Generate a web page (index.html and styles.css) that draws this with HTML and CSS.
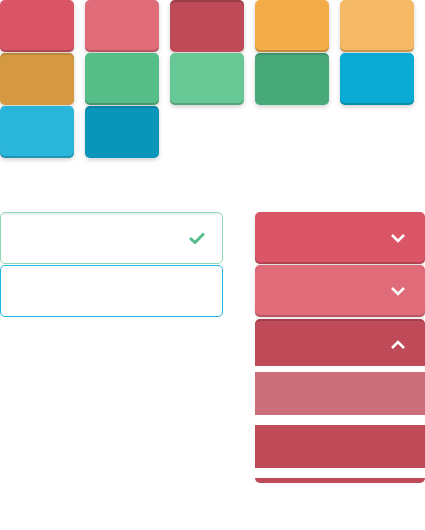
FILE: index.html
```
<!DOCTYPE html>
<html lang="en">
<head>
<meta charset="utf-8">
<title>Flat UI states</title>
<link rel="stylesheet" href="styles.css">
</head>
<body>
<div class="swatches">
  <div class="sw red"></div>
  <div class="sw red-hover"></div>
  <div class="sw red-active"></div>
  <div class="sw orange"></div>
  <div class="sw orange-hover"></div>
  <div class="sw orange-active"></div>
  <div class="sw green"></div>
  <div class="sw green-hover"></div>
  <div class="sw green-active"></div>
  <div class="sw blue"></div>
  <div class="sw blue-hover"></div>
  <div class="sw blue-active"></div>
</div>
<div class="forms">
  <div class="inputs">
    <div class="field valid">
      <svg class="check" width="18" height="12" viewBox="0 0 18 12"><path d="M2 6 L7 10.5 L16 1.5" fill="none" stroke="#56be89" stroke-width="3"/></svg>
    </div>
    <div class="field focus"></div>
  </div>
  <div class="drops">
    <div class="drop">
      <svg class="chev" width="16" height="10" viewBox="0 0 16 10"><path d="M2 2 L8 8 L14 2" fill="none" stroke="#fff" stroke-width="2.5"/></svg>
    </div>
    <div class="drop hover">
      <svg class="chev" width="16" height="10" viewBox="0 0 16 10"><path d="M2 2 L8 8 L14 2" fill="none" stroke="#fff" stroke-width="2.5"/></svg>
    </div>
    <div class="drop open">
      <svg class="chev" width="16" height="10" viewBox="0 0 16 10"><path d="M2 8 L8 2 L14 8" fill="none" stroke="#fff" stroke-width="2.5"/></svg>
    </div>
    <ul class="menu">
      <li class="item hl"></li>
      <li class="item"></li>
    </ul>
  </div>
</div>
</body>
</html>
```
FILE: styles.css
```
html, body {
  margin: 0;
  padding: 0;
  background: #fff;
  font-family: "Lato", "Liberation Sans", sans-serif;
}
.swatches {
  display: grid;
  grid-template-columns: repeat(5, 74px);
  grid-auto-rows: 52px;
  column-gap: 11px;
  row-gap: 1px;
}
.sw {
  border-radius: 5px;
  box-shadow: inset 0 -2px 0 rgba(0,0,0,0.18), 0 2px 4px rgba(0,0,0,0.18);
}
.red { background: #da5565; }
.red-hover { background: #e06b79; }
.red-active { background: #bf4b59; box-shadow: inset 0 2px 0 rgba(0,0,0,0.18), 0 2px 4px rgba(0,0,0,0.18); }
.orange { background: #f4ac48; }
.orange-hover { background: #f5b865; }
.orange-active { background: #d59a41; box-shadow: inset 0 2px 0 rgba(0,0,0,0.12), 0 2px 4px rgba(0,0,0,0.18); }
.green { background: #56be89; }
.green-hover { background: #67c896; }
.green-active { background: #47a878; box-shadow: inset 0 2px 0 rgba(0,0,0,0.12), 0 2px 4px rgba(0,0,0,0.18); }
.blue { background: #0aabd4; }
.blue-hover { background: #2ab5da; }
.blue-active { background: #0a95ba; box-shadow: inset 0 2px 0 rgba(0,0,0,0.12), 0 2px 4px rgba(0,0,0,0.18); }

.forms {
  display: flex;
  justify-content: space-between;
  margin-top: 54px;
}
.inputs {
  width: 223px;
  display: flex;
  flex-direction: column;
  gap: 1px;
}
.field {
  box-sizing: border-box;
  height: 52px;
  border-radius: 5px;
  border: 1px solid #8dd8b1;
  display: flex;
  align-items: center;
  justify-content: flex-end;
  padding-right: 16px;
}
.field.valid {
  box-shadow: inset 0 2px 0 rgba(0,0,0,0.06);
}
.field.focus {
  border-color: #1cb5dd;
}
.drops {
  width: 170px;
  display: flex;
  flex-direction: column;
  gap: 1px;
}
.drop {
  box-sizing: border-box;
  height: 52px;
  border-radius: 5px;
  background: #da5565;
  box-shadow: inset 0 -2px 0 rgba(0,0,0,0.18), 0 1px 3px rgba(0,0,0,0.15);
  display: flex;
  align-items: center;
  justify-content: flex-end;
  padding-right: 19px;
}
.drop.hover { background: #e06b79; }
.drop.open {
  height: 47px;
  margin-top: 1px;
  background: #bf4b59;
  border-radius: 5px 5px 0 0;
  box-shadow: inset 0 2px 0 rgba(0,0,0,0.15);
  padding-top: 4px;
}
.menu {
  list-style: none;
  margin: 5px 0 0;
  padding: 0 0 5px;
  background: #bf4b59;
  border-radius: 0 0 5px 5px;
}
.item {
  height: 43px;
  background: #bf4b59;
  border-bottom: 10px solid #fff;
}
.item.hl { background: #cc6f7a; }
```
